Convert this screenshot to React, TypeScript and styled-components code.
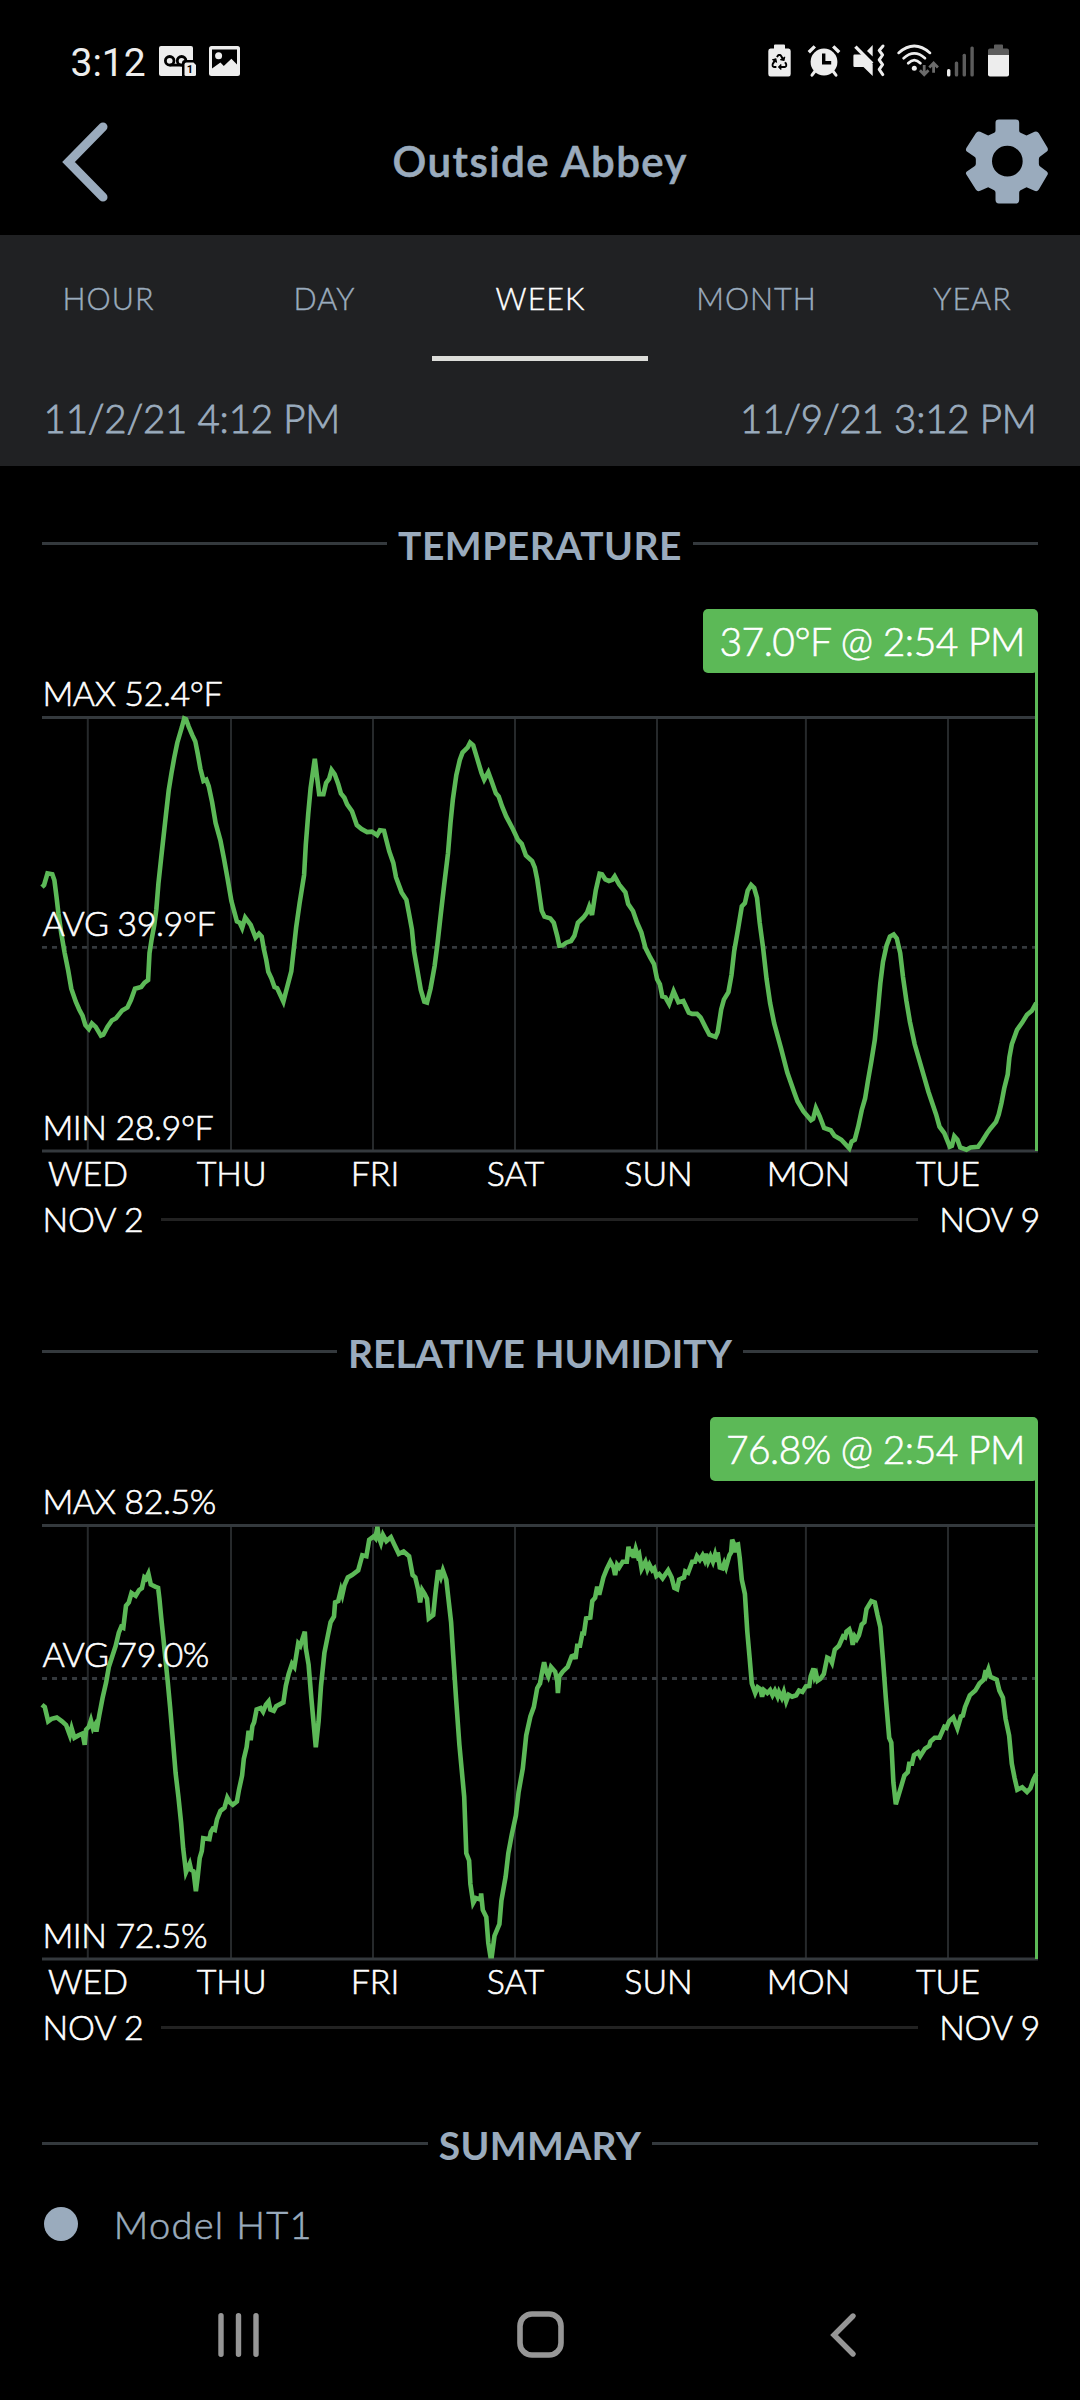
import React from "react";
import styled, { createGlobalStyle } from "styled-components";
import { FaRecycle } from "react-icons/fa";

const color = {
  slate: "#9aabbd",
  panel: "#202123",
  rule: "#34393d",
  grid: "#26292b",
  green: "#5cb957",
  status: "#ededed",
  statusDim: "#5c5c5c",
  nav: "#969696",
};

const GlobalStyle = createGlobalStyle`
  body {
    margin: 0;
    background: #000;
    color: #fff;
    font-family: Lato, "Open Sans", sans-serif;
  }
`;

const Screen = styled.div`
  width: 1080px;
  height: 2400px;
  overflow: hidden;
  display: flex;
  flex-direction: column;
  background: #000;
`;

/* ---------- status bar ---------- */

const StatusBar = styled.div`
  box-sizing: border-box;
  height: 90px;
  padding: 31px 71px 0 70.5px;
  display: flex;
  align-items: center;
  justify-content: space-between;
`;

const StatusGroup = styled.div`
  display: flex;
  align-items: center;
`;

const Clock = styled.span`
  font: 400 39px/46px Roboto, sans-serif;
  padding-top: 4px;
  color: ${color.status};
`;

const Glyph = styled.svg<{ $gap?: number }>`
  display: block;
  margin-left: ${(p) => p.$gap ?? 0}px;
  overflow: visible;
`;

const BadgeDigit = styled.text`
  font: 700 11px Roboto, sans-serif;
  text-anchor: middle;
`;

function VoicemailIcon() {
  return (
    <Glyph $gap={13.4} width={38} height={30} viewBox="0 0 38 30">
      <rect width="34" height="30" rx="2" fill={color.status} />
      <g fill="none" stroke="#000" strokeWidth="2.8">
        <circle cx="10.7" cy="14.8" r="4.3" />
        <circle cx="22.6" cy="14.8" r="4.3" />
        <path d="M10.7 19.1H23" />
      </g>
      <path d="M23 31V17Q23 14 26 14H38V31Z" fill="#000" />
      <path d="M27.5 16.5H34.5L37 19V28.5Q37 30 35.5 30H27Q25.5 30 25.5 28.5V18.5Q25.5 16.5 27.5 16.5Z" fill={color.status} />
      <BadgeDigit x="31" y="27.4">1</BadgeDigit>
    </Glyph>
  );
}

function PictureIcon() {
  return (
    <Glyph $gap={12} width={31} height={30} viewBox="0 0 31 30">
      <rect width="31" height="30" rx="2.5" fill={color.status} />
      <path d="M3 3.5H28V18.5L22.4 12.7L14.8 20L11.4 16.5L3 22.5Z" fill="#000" />
      <circle cx="9.6" cy="9.8" r="3.5" fill={color.status} />
    </Glyph>
  );
}

function BatterySaverIcon() {
  return (
    <Glyph width={23} height={33} viewBox="0 0 23 33">
      <path d="M6 4.5V1.5Q6 .4 7 .4H16Q17 .4 17 1.5V4.5H20.5Q22.7 4.5 22.7 7V30Q22.7 32.6 20.5 32.6H2.5Q.3 32.6 .3 30V7Q.3 4.5 2.5 4.5Z" fill={color.status} />
      <FaRecycle x={3.4} y={10} size={16} color="#000" />
    </Glyph>
  );
}

function AlarmIcon() {
  return (
    <Glyph $gap={16} width={34} height={33} viewBox="0 0 34 33">
      <circle cx="17" cy="18" r="13.4" fill={color.status} />
      <g fill="none" stroke={color.status} strokeWidth="3.4">
        <path d="M1.8 8.2L7.8 2.4M32.2 8.2L26.2 2.4" />
        <path d="M8.5 26.5L5 31.2M25.5 26.5L29 31.2" strokeLinecap="round" strokeWidth="3" />
      </g>
      <path d="M16.7 9.5V18.8H24.2" fill="none" stroke="#000" strokeWidth="3.4" />
    </Glyph>
  );
}

function MuteVibrateIcon() {
  return (
    <Glyph $gap={12} width={32} height={33} viewBox="0 0 32 33">
      <path d="M1.5 10.5H9L19.7 20V32L10.5 23H1.5Q.4 23 .4 21.8V11.7Q.4 10.5 1.5 10.5Z" fill={color.status} />
      <path d="M2.4 2.6L19.2 19.6" stroke={color.status} strokeWidth="3.4" />
      <path d="M19.7 1V12.5L14 7Z" fill={color.status} />
      <path d="M30 2L26.2 6.4L29.6 11L26.2 15.8L29.6 20.6L26.2 25.4L29.8 30.6" fill="none" stroke={color.status} strokeWidth="3" strokeLinecap="round" strokeLinejoin="round" />
    </Glyph>
  );
}

function WifiIcon() {
  return (
    <Glyph $gap={12} width={41} height={33} viewBox="0 0 41 33">
      <g fill="none" stroke={color.status} strokeWidth="2.7" strokeLinecap="round">
        <path d="M1.6 8.9Q17.3 -4.9 33 8.9" />
        <path d="M6.6 14.2Q17.3 4.4 28 14.2" />
        <path d="M11.2 19.2Q17.3 13 23.4 19.2" />
      </g>
      <circle cx="17.3" cy="24.2" r="2.5" fill={color.status} />
      <g fill="none" stroke="#6b6b6b" strokeWidth="2.8">
        <path d="M27.2 21V31M22.9 26.3L27.2 30.8L31.5 26.3" />
        <path d="M36.6 28.8V18.8M32.3 23.5L36.6 19L40.9 23.5" />
      </g>
    </Glyph>
  );
}

function SignalIcon() {
  const bars = [25, 17.5, 9.8, 2.4];
  return (
    <Glyph $gap={8} width={29} height={33} viewBox="0 0 29 33">
      {bars.map((top, i) => (
        <rect key={top} x={1 + i * 7.8} y={top} width="3.4" height={32.6 - top} rx="1.5" fill={i === 0 ? color.status : color.statusDim} />
      ))}
    </Glyph>
  );
}

function BatteryIcon() {
  return (
    <Glyph $gap={13} width={21} height={33} viewBox="0 0 21 33">
      <path d="M6 4.5V1.4Q6 .4 7 .4H14Q15 .4 15 1.4V4.5H19Q21 4.5 21 6.5V11H0V6.5Q0 4.5 2 4.5Z" fill={color.statusDim} />
      <path d="M0 11H21V30.6Q21 32.6 19 32.6H2Q0 32.6 0 30.6Z" fill={color.status} />
    </Glyph>
  );
}

/* ---------- header ---------- */

const Header = styled.header`
  box-sizing: border-box;
  height: 145px;
  padding: 0 31.5px 0 62px;
  display: grid;
  grid-template-columns: 86px 1fr 86px;
  align-items: center;
`;

const Title = styled.h1`
  margin: 0;
  padding-bottom: 3px;
  padding-right: 30px;
  text-align: center;
  color: ${color.slate};
  font-size: 42px;
  line-height: 50px;
  font-weight: 600;
  letter-spacing: 1.5px;
  -webkit-text-stroke: 0.6px currentColor;
`;

const BackSlot = styled.div`
  padding-bottom: 1px;
`;

const GearSlot = styled.div`
  display: flex;
  justify-content: flex-end;
  padding-bottom: 3px;
`;

function BackChevron() {
  return (
    <Glyph width={46} height={80} viewBox="0 0 46 80">
      <path d="M41 4.9L6.5 40L41 75.1" fill="none" stroke={color.slate} strokeWidth="9" strokeLinecap="round" />
    </Glyph>
  );
}

function GearIcon() {
  return (
    <Glyph width={83.7} height={85} viewBox="15.5 25.5 251 255">
      <path
        fillRule="evenodd"
        fill={color.slate}
        d="M107 60V37Q107 27 117 27H168Q178 27 178 37V60Q178 66 182 67L200 75L224 64Q232 61 237 68L263 112Q266 119 261 123L240 139Q237 141 237 146V160Q237 165 240 167L261 183Q266 187 263 193L237 237Q232 245 224 241L200 230L182 239Q178 241 178 247V268Q178 279 168 279H117Q107 279 107 268V247Q107 241 103 239L85 230L61 241Q53 245 48 237L20 193Q16 187 21 183L44 167Q48 165 48 160V146Q48 141 44 139L21 123Q16 119 20 112L48 68Q53 61 61 64L85 75L103 67Q107 66 107 60ZM142.5 106A46 46 0 1 0 142.5 198A46 46 0 1 0 142.5 106Z"
      />
    </Glyph>
  );
}

/* ---------- range panel ---------- */

const RangePanel = styled.section`
  background: ${color.panel};
  height: 231px;
`;

const Tabs = styled.nav`
  display: grid;
  grid-template-columns: repeat(5, 1fr);
`;

const Tab = styled.div<{ $active?: boolean }>`
  box-sizing: border-box;
  height: 126px;
  padding: 4px 0 0 1px;
  display: flex;
  align-items: center;
  justify-content: center;
  border-bottom: 5px solid ${(p) => (p.$active ? "#dcddd9" : "transparent")};
  color: ${(p) => (p.$active ? "#fff" : color.slate)};
  font-size: 30.5px;
  font-weight: 300;
  letter-spacing: 1px;
  -webkit-text-stroke: 0.4px currentColor;
`;

const RangeDates = styled.div`
  box-sizing: border-box;
  height: 105px;
  padding: 9px 43.5px 0 43.5px;
  display: flex;
  align-items: center;
  justify-content: space-between;
  color: ${color.slate};
  font-size: 38.5px;
  font-weight: 300;
  letter-spacing: -0.2px;
  -webkit-text-stroke: 0.8px currentColor;
`;

/* ---------- sections ---------- */

const Section = styled.section<{ $after: number }>`
  padding: 0 42px ${(p) => p.$after}px;
`;

const Content = styled.main`
  flex: 1;
  padding-top: 53px;
`;

const Heading = styled.div`
  height: 49px;
  display: flex;
  align-items: center;
  gap: 11px;
`;

const HeadingText = styled.h2<{ $tracking: number }>`
  margin: 0;
  padding-top: 3px;
  color: ${color.slate};
  font-size: 39px;
  line-height: 46px;
  font-weight: 700;
  letter-spacing: ${(p) => p.$tracking}px;
`;

const Rule = styled.span`
  flex: 1;
  height: 3px;
  background: ${color.rule};
`;

const ChartArea = styled.div`
  position: relative;
  margin-top: 40px;
  height: 587px;
`;

const ChartSvg = styled.svg`
  display: block;
  overflow: visible;
`;

const ChartLabel = styled.text`
  font: 300 34px Lato, sans-serif;
  fill: #fff;
  stroke: #fff;
  stroke-width: 0.6px;
  letter-spacing: -0.4px;
`;

const DayLabel = styled(ChartLabel)`
  text-anchor: middle;
  letter-spacing: 0;
`;

const Readout = styled.div`
  position: absolute;
  top: 1px;
  right: 0;
  height: 64px;
  padding: 0 13px 0 16px;
  border-radius: 5px;
  background: ${color.green};
  font-size: 39px;
  line-height: 65px;
  font-weight: 300;
  letter-spacing: -0.5px;
  white-space: nowrap;
  -webkit-text-stroke: 0.6px currentColor;
`;

const Span = styled.div`
  height: 46px;
  margin: 0 -2px 0 0.6px;
  padding-bottom: 2px;
  display: flex;
  align-items: center;
  font-size: 34px;
  font-weight: 300;
  letter-spacing: -0.25px;
  -webkit-text-stroke: 0.6px currentColor;
`;

const SpanRule = styled.span`
  flex: 1;
  height: 3px;
  margin: 3px 21px 0 18px;
  background: #222;
`;

type Point = [number, number];

interface Trace {
  top: number;
  bottom: number;
  firstHalf: Point[];
  secondHalf: Point[];
}

const PLOT = { width: 996, top: 109.5, bottom: 543 };
const DAYS: { name: string; line: number; label: number }[] = [
  { name: "WED", line: 45.8, label: 46 },
  { name: "THU", line: 189, label: 189.7 },
  { name: "FRI", line: 331, label: 333 },
  { name: "SAT", line: 473, label: 473.5 },
  { name: "SUN", line: 615, label: 616.5 },
  { name: "MON", line: 763.9, label: 766.5 },
  { name: "TUE", line: 906, label: 906 },
];

const TRACE_START = 122;
const HALF_WIDTH = 1568;
const TRACE_WIDTH = 2892;

function tracePoints({ top, bottom, firstHalf, secondHalf }: Trace) {
  const yScale = (PLOT.bottom - PLOT.top) / (bottom - top);
  const all: Point[] = [...firstHalf, ...secondHalf.map(([x, y]): Point => [x + HALF_WIDTH, y])];
  return all
    .map(([x, y]) => {
      const px = ((x - TRACE_START) * PLOT.width) / TRACE_WIDTH;
      const py = PLOT.top + (y - top) * yScale;
      return `${px.toFixed(1)},${py.toFixed(1)}`;
    })
    .join(" ");
}

const temperature: Trace = {
  top: 317,
  bottom: 1316,
  firstHalf: [
    [122,708],[128,703],[138,676],[152,678],[158,692],[164,730],[170,770],[178,815],[188,860],[198,900],[207,942],[220,972],[230,990],[240,1005],[248,1026],[258,1035],[267,1022],[278,1030],[293,1050],[300,1048],[312,1030],[325,1015],[337,1010],[355,992],[370,985],[380,968],[392,942],[410,938],[420,928],[430,922],[434,860],[440,830],[448,795],[454,760],[460,700],[468,640],[475,590],[482,540],[490,485],[498,445],[506,410],[515,375],[528,340],[535,319],[540,321],[548,338],[558,357],[567,372],[574,400],[582,435],[591,463],[599,460],[606,475],[616,512],[626,560],[640,600],[650,640],[660,685],[672,740],[688,787],[696,790],[703,802],[712,778],[728,795],[742,824],[752,815],[760,822],[766,850],[773,875],[779,903],[788,918],[797,938],[805,941],[823,972],[830,950],[846,902],[853,850],[860,800],[870,745],[883,680],[888,610],[895,540],[902,480],[914,412],[920,450],[927,494],[939,494],[947,468],[956,458],[963,438],[972,448],[982,470],[990,492],[1000,502],[1008,517],[1022,533],[1036,565],[1050,574],[1066,581],[1080,580],[1095,588],[1103,577],[1115,578],[1122,600],[1130,625],[1142,652],[1150,685],[1166,720],[1180,737],[1188,770],[1196,805],[1202,855],[1212,900],[1222,945],[1232,972],[1240,974],[1250,942],[1262,890],[1270,840],[1280,770],[1290,700],[1301,630],[1308,560],[1315,505],[1325,450],[1335,415],[1343,398],[1358,386],[1365,375],[1374,381],[1385,410],[1398,445],[1406,460],[1418,443],[1428,465],[1440,492],[1448,499],[1458,522],[1470,545],[1490,575],[1504,599],[1515,608],[1527,635],[1545,648],[1553,663],[1560,690],
  ],
  secondHalf: [
    [0,735],[5,762],[13,776],[30,780],[40,790],[50,820],[56,843],[66,842],[76,836],[90,832],[100,820],[110,790],[126,778],[137,766],[143,753],[151,772],[162,715],[173,677],[180,678],[190,690],[200,694],[210,691],[217,683],[230,702],[248,720],[256,747],[270,763],[282,790],[294,812],[306,848],[320,870],[331,885],[340,920],[348,932],[355,960],[364,962],[375,977],[388,948],[402,973],[416,970],[432,997],[442,1000],[456,1000],[466,1008],[480,1030],[492,1048],[510,1053],[516,1042],[526,990],[534,967],[547,950],[556,910],[564,855],[575,805],[586,752],[595,745],[603,716],[613,703],[622,710],[630,732],[638,790],[648,850],[658,920],[668,975],[680,1022],[700,1080],[718,1135],[740,1185],[748,1202],[765,1225],[787,1245],[793,1242],[801,1217],[812,1236],[825,1263],[844,1268],[855,1281],[875,1290],[898,1310],[905,1294],[914,1290],[924,1260],[934,1222],[944,1195],[952,1155],[962,1110],[972,1060],[980,1000],[988,930],[996,880],[1006,843],[1016,822],[1027,817],[1036,826],[1046,860],[1054,915],[1064,970],[1074,1018],[1088,1070],[1108,1125],[1128,1180],[1150,1232],[1160,1260],[1174,1275],[1190,1306],[1196,1304],[1203,1282],[1212,1290],[1220,1308],[1238,1313],[1250,1308],[1272,1306],[1284,1293],[1298,1275],[1308,1264],[1324,1249],[1332,1232],[1340,1205],[1348,1172],[1358,1140],[1363,1100],[1370,1070],[1385,1037],[1400,1020],[1414,1002],[1428,993],[1441,975],
  ],
};

const humidity: Trace = {
  top: 435,
  bottom: 1354,
  firstHalf: [
    [122,815],[130,820],[140,850],[150,845],[165,842],[180,850],[192,858],[203,880],[208,865],[216,885],[228,880],[240,876],[246,900],[250,868],[258,862],[264,848],[270,865],[276,858],[280,872],[288,838],[298,800],[308,768],[316,735],[326,712],[336,690],[345,662],[352,650],[358,652],[366,605],[374,598],[382,578],[394,584],[404,572],[412,568],[419,545],[424,548],[431,537],[438,560],[452,565],[459,567],[463,590],[468,630],[474,670],[480,715],[487,765],[494,820],[502,890],[510,960],[518,1010],[526,1065],[532,1120],[540,1170],[551,1152],[555,1165],[562,1168],[569,1210],[574,1180],[580,1140],[586,1125],[590,1098],[608,1100],[612,1085],[618,1078],[624,1080],[630,1058],[640,1040],[652,1033],[660,1012],[668,1022],[676,1027],[688,1020],[694,995],[703,965],[708,930],[716,905],[722,870],[728,890],[733,860],[738,852],[745,825],[757,822],[764,830],[772,815],[780,808],[785,825],[795,828],[802,818],[823,810],[830,775],[838,750],[848,728],[855,735],[866,685],[872,690],[885,660],[888,695],[896,730],[904,800],[917,905],[925,850],[932,775],[942,705],[952,668],[960,640],[970,628],[973,598],[982,595],[990,572],[994,582],[1000,562],[1010,545],[1022,540],[1040,530],[1052,498],[1064,500],[1072,465],[1085,458],[1090,462],[1096,438],[1100,460],[1106,472],[1112,455],[1122,468],[1135,460],[1145,475],[1158,495],[1172,490],[1188,500],[1198,540],[1206,545],[1214,570],[1220,598],[1226,572],[1233,580],[1240,590],[1245,632],[1258,625],[1264,580],[1272,530],[1280,545],[1286,530],[1296,550],[1302,590],[1310,640],[1316,710],[1324,800],[1334,900],[1348,1010],[1354,1130],[1362,1145],[1366,1195],[1374,1235],[1382,1225],[1396,1228],[1397,1215],[1402,1250],[1412,1265],[1418,1320],[1424,1348],[1428,1348],[1436,1305],[1450,1280],[1456,1230],[1468,1180],[1476,1130],[1486,1090],[1498,1050],[1506,1000],[1518,950],[1528,880],[1540,840],[1550,820],[1560,780],[1566,772],
  ],
  secondHalf: [
    [0,770],[5,750],[12,725],[18,745],[24,755],[32,735],[44,745],[50,765],[52,790],[56,755],[66,745],[80,735],[92,712],[100,710],[103,718],[108,690],[116,690],[124,660],[127,668],[134,632],[146,630],[152,595],[160,588],[166,565],[172,582],[184,545],[194,527],[204,512],[214,525],[218,540],[224,518],[230,524],[240,512],[252,512],[257,480],[262,500],[266,485],[272,503],[278,485],[284,500],[288,496],[295,527],[306,512],[312,528],[318,518],[326,530],[332,526],[338,542],[346,538],[356,547],[372,530],[382,545],[390,567],[398,570],[404,550],[418,545],[422,532],[430,535],[442,512],[450,512],[456,500],[464,508],[472,498],[478,508],[482,495],[488,512],[495,500],[502,512],[508,497],[513,512],[516,492],[522,524],[530,526],[535,515],[540,524],[550,498],[555,492],[558,465],[562,472],[566,492],[570,476],[575,475],[580,505],[586,550],[595,580],[602,660],[608,710],[615,770],[625,790],[632,778],[640,782],[645,798],[650,784],[660,790],[668,784],[675,795],[682,785],[690,798],[694,788],[702,800],[708,788],[715,808],[722,794],[732,798],[744,795],[752,785],[762,788],[772,776],[782,775],[786,755],[794,738],[798,756],[802,750],[806,764],[814,760],[824,750],[834,715],[842,718],[848,726],[856,698],[868,690],[880,670],[886,672],[890,660],[898,655],[904,668],[908,688],[914,670],[920,676],[926,668],[934,645],[942,640],[948,612],[962,595],[972,598],[980,625],[988,650],[996,720],[1004,800],[1014,885],[1020,895],[1026,980],[1033,1026],[1048,990],[1058,965],[1068,958],[1072,940],[1080,940],[1086,922],[1098,916],[1104,924],[1118,908],[1130,902],[1134,893],[1146,885],[1160,885],[1174,862],[1180,864],[1188,850],[1200,842],[1212,865],[1222,840],[1228,838],[1234,820],[1248,795],[1264,785],[1276,770],[1288,762],[1294,742],[1297,750],[1302,740],[1308,756],[1326,762],[1334,785],[1344,800],[1352,845],[1362,880],[1370,940],[1378,970],[1386,995],[1400,990],[1414,1000],[1424,992],[1432,975],[1441,962],
  ],
};

interface ChartProps {
  title: string;
  tracking: number;
  readout: string;
  max: string;
  avg: string;
  min: string;
  avgY: number;
  trace: Trace;
  after: number;
}

function SectionHeading({ tracking, children }: { tracking: number; children: React.ReactNode }) {
  return (
    <Heading>
      <Rule />
      <HeadingText $tracking={tracking}>{children}</HeadingText>
      <Rule />
    </Heading>
  );
}

function ChartSection({ title, tracking, readout, max, avg, min, avgY, trace, after }: ChartProps) {
  return (
    <Section $after={after}>
      <SectionHeading tracking={tracking}>{title}</SectionHeading>
      <ChartArea>
        <ChartSvg width={996} height={587} viewBox="0 0 996 587">
          {DAYS.map((d) => (
            <path key={d.name} d={`M${d.line} ${PLOT.top}V${PLOT.bottom}`} stroke={color.grid} strokeWidth="2" />
          ))}
          <path d={`M0 ${PLOT.top}H996M0 ${PLOT.bottom}H996`} stroke={color.rule} strokeWidth="2.8" />
          <path d={`M0 ${avgY}H994`} stroke={color.rule} strokeWidth="2.8" strokeDasharray="5 5" />
          <polyline points={tracePoints(trace)} fill="none" stroke={color.green} strokeWidth="4.6" />
          <path d={`M994.5 60V${PLOT.bottom}`} stroke={color.green} strokeWidth="3" />
          <ChartLabel x="0.4" y="98">{max}</ChartLabel>
          <ChartLabel x="0.4" y={avgY - 11.6}>{avg}</ChartLabel>
          <ChartLabel x="0.4" y="531.5">{min}</ChartLabel>
          {DAYS.map((d) => (
            <DayLabel key={d.name} x={d.label} y="577.5">{d.name}</DayLabel>
          ))}
        </ChartSvg>
        <Readout>{readout}</Readout>
      </ChartArea>
      <Span>
        NOV 2
        <SpanRule />
        NOV 9
      </Span>
    </Section>
  );
}

/* ---------- summary & navigation ---------- */

const SummaryRow = styled.div`
  margin-top: 32px;
  padding-left: 1.7px;
  height: 48px;
  display: flex;
  align-items: center;
  gap: 35.5px;
  color: ${color.slate};
  font-size: 38px;
  font-weight: 300;
  letter-spacing: 1.3px;
  -webkit-text-stroke: 0.6px currentColor;
`;

const Dot = styled.span`
  width: 34.6px;
  height: 34.6px;
  border-radius: 50%;
  background: ${color.slate};
`;

const NavBar = styled.nav`
  height: 131px;
  padding: 0 86px 0 87px;
  display: grid;
  grid-template-columns: repeat(3, 1fr);
  align-items: center;
  justify-items: center;
`;

export default function App() {
  return (
    <>
      <GlobalStyle />
      <Screen>
        <StatusBar>
          <StatusGroup>
            <Clock>3:12</Clock>
            <VoicemailIcon />
            <PictureIcon />
          </StatusGroup>
          <StatusGroup>
            <BatterySaverIcon />
            <AlarmIcon />
            <MuteVibrateIcon />
            <WifiIcon />
            <SignalIcon />
            <BatteryIcon />
          </StatusGroup>
        </StatusBar>
        <Header>
          <BackSlot>
            <BackChevron />
          </BackSlot>
          <Title>Outside Abbey</Title>
          <GearSlot>
            <GearIcon />
          </GearSlot>
        </Header>
        <RangePanel>
          <Tabs>
            {["HOUR", "DAY", "WEEK", "MONTH", "YEAR"].map((name) => (
              <Tab key={name} $active={name === "WEEK"}>{name}</Tab>
            ))}
          </Tabs>
          <RangeDates>
            <span>11/2/21 4:12 PM</span>
            <span>11/9/21 3:12 PM</span>
          </RangeDates>
        </RangePanel>
        <Content>
          <ChartSection
            title="TEMPERATURE"
            tracking={0.5}
            readout="37.0°F @ 2:54 PM"
            max="MAX 52.4°F"
            avg="AVG 39.9°F"
            min="MIN 28.9°F"
            avgY={339.3}
            trace={temperature}
            after={84}
          />
          <ChartSection
            title="RELATIVE HUMIDITY"
            tracking={0.05}
            readout="76.8% @ 2:54 PM"
            max="MAX 82.5%"
            avg="AVG 79.0%"
            min="MIN 72.5%"
            avgY={262.5}
            trace={humidity}
            after={68}
          />
          <Section $after={0}>
            <SectionHeading tracking={0.35}>SUMMARY</SectionHeading>
            <SummaryRow>
              <Dot />
              Model HT1
            </SummaryRow>
          </Section>
        </Content>
        <NavBar>
          <Glyph width={41} height={44} viewBox="0 0 41 44">
            <path d="M3 2.8V41.2M20.5 2.8V41.2M38 2.8V41.2" stroke={color.nav} strokeWidth="5.4" strokeLinecap="round" />
          </Glyph>
          <Glyph width={47} height={47} viewBox="0 0 47 47">
            <rect x="3" y="3" width="41" height="41" rx="12" fill="none" stroke={color.nav} strokeWidth="5.6" />
          </Glyph>
          <Glyph width={26} height={44} viewBox="0 0 26 44">
            <path d="M23 3L4 22L23 41" fill="none" stroke={color.nav} strokeWidth="5.4" strokeLinecap="round" />
          </Glyph>
        </NavBar>
      </Screen>
    </>
  );
}
